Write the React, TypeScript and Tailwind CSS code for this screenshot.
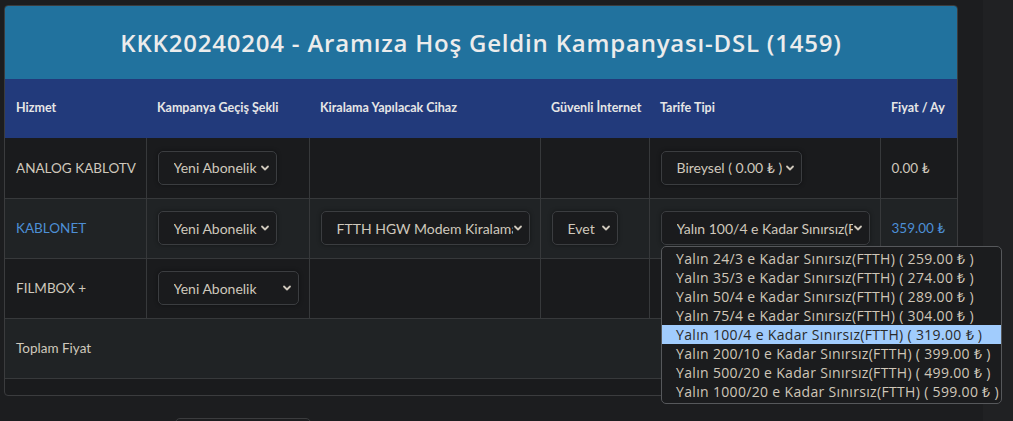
import React from "react";

const FONT = { fontFamily: "Lato, 'Open Sans', sans-serif" };

function Chevron({ className = "" }: { className?: string }) {
  return (
    <svg width="10" height="10" viewBox="0 0 10 10" className={className}>
      <path d="M2 3.5 L5 6.5 L8 3.5" fill="none" stroke="#cfc8bc" strokeWidth="1.8" strokeLinecap="round" strokeLinejoin="round" />
    </svg>
  );
}

function Select({ label, width, spread = false }: { label: string; width?: number; spread?: boolean }) {
  return (
    <div
      className={`flex h-[34px] items-center rounded-[5px] border border-[#3b3d40] bg-[#1a1b1d] pl-[15px] pr-[6px] text-[14px] text-[#cfc8bc] shadow-[0_0_4px_rgba(0,0,0,0.4)] ${spread ? "justify-between" : "w-fit gap-[3px]"}`}
      style={width ? { width } : undefined}
    >
      <span className="overflow-hidden whitespace-nowrap">{label}</span>
      <Chevron className="shrink-0" />
    </div>
  );
}

const options = [
  "Yalın 24/3 e Kadar Sınırsız(FTTH) ( 259.00 ₺ )",
  "Yalın 35/3 e Kadar Sınırsız(FTTH) ( 274.00 ₺ )",
  "Yalın 50/4 e Kadar Sınırsız(FTTH) ( 289.00 ₺ )",
  "Yalın 75/4 e Kadar Sınırsız(FTTH) ( 304.00 ₺ )",
  "Yalın 100/4 e Kadar Sınırsız(FTTH) ( 319.00 ₺ )",
  "Yalın 200/10 e Kadar Sınırsız(FTTH) ( 399.00 ₺ )",
  "Yalın 500/20 e Kadar Sınırsız(FTTH) ( 499.00 ₺ )",
  "Yalın 1000/20 e Kadar Sınırsız(FTTH) ( 599.00 ₺ )",
];

export default function App() {
  const td = "border-r border-[#37393b] px-[11px] align-middle whitespace-nowrap";
  return (
    <div className="relative flex h-[421px] w-[1013px] overflow-hidden bg-[#1c1d1f]" style={FONT}>
      <div className="w-[983px] shrink-0 pl-[4px] pt-[5px]">
        <div className="w-[954px] overflow-hidden rounded-[4px] border border-[#3b3c3e] bg-[#1a1b1d]">
          <div
            className="flex h-[73px] items-center justify-center bg-[#21729e] text-[24px] font-semibold tracking-[0.8px] text-[#ececec]"
            style={{ fontFamily: "'Open Sans', sans-serif" }}
          >
            KKK20240204 - Aramıza Hoş Geldin Kampanyası-DSL (1459)
          </div>
          <table className="w-[952px] table-fixed border-collapse text-[13.5px] text-[#cfc8bc]">
            <colgroup>
              <col style={{ width: 141 }} />
              <col style={{ width: 163 }} />
              <col style={{ width: 231 }} />
              <col style={{ width: 109 }} />
              <col style={{ width: 231 }} />
              <col style={{ width: 77 }} />
            </colgroup>
            <thead>
              <tr className="h-[59px] bg-[#223a7b] text-left text-[12.5px] font-bold text-[#e6e6e6]">
                <th className="px-[11px]">Hizmet</th>
                <th className="px-[11px]">Kampanya Geçiş Şekli</th>
                <th className="px-[11px]">Kiralama Yapılacak Cihaz</th>
                <th className="whitespace-nowrap px-[11px]">Güvenli İnternet</th>
                <th className="px-[11px]">Tarife Tipi</th>
                <th className="whitespace-nowrap px-[11px]">Fiyat / Ay</th>
              </tr>
            </thead>
            <tbody>
              <tr className="h-[60px] border-b border-[#37393b] bg-[#1a1b1d]">
                <td className={td}>ANALOG KABLOTV</td>
                <td className={td}><Select label="Yeni Abonelik" /></td>
                <td className={td}></td>
                <td className={td}></td>
                <td className={td}><Select label="Bireysel ( 0.00 ₺ )" /></td>
                <td className="px-[11px]">0.00 ₺</td>
              </tr>
              <tr className="h-[60px] border-b border-[#37393b] bg-[#202325]">
                <td className={`${td} text-[#4d8fd6]`}>KABLONET</td>
                <td className={td}><Select label="Yeni Abonelik" /></td>
                <td className={td}><Select label="FTTH HGW Modem Kiralama" width={209} spread /></td>
                <td className={td}><Select label="Evet" width={66} spread /></td>
                <td className={td}><Select label="Yalın 100/4 e Kadar Sınırsız(FTTH)" width={209} spread /></td>
                <td className="px-[11px] text-[#4d8fd6]">359.00 ₺</td>
              </tr>
              <tr className="h-[60px] border-b border-[#37393b] bg-[#1a1b1d]">
                <td className={td}>FILMBOX +</td>
                <td className={td}><Select label="Yeni Abonelik" width={141} spread /></td>
                <td className={td}></td>
                <td className={td}></td>
                <td className={td}></td>
                <td className="px-[11px]"></td>
              </tr>
              <tr className="h-[60px] border-b border-[#37393b] bg-[#202325]">
                <td className="px-[11px]" colSpan={6}>Toplam Fiyat</td>
              </tr>
            </tbody>
          </table>
          <div className="h-[16px]" />
        </div>
        <div className="ml-[171px] mt-[22px] h-[20px] w-[136px] rounded-t-[5px] border border-[#3b3c3e]" />
      </div>
      <div className="flex-1 bg-[#202123]" />

      {/* open tariff list */}
      <div
        className="absolute left-[661px] top-[246px] w-[341px] rounded-[5px] border border-[#56585b] bg-[#1b1c1e] py-[2px] text-[14px] leading-[19px] tracking-[0.33px] text-[#cfc6b8]"
        style={{ fontFamily: "'Open Sans', sans-serif" }}
      >
        {options.map((o, i) => (
          <div
            key={o}
            className={`whitespace-nowrap pl-[14px] ${i === 4 ? "bg-[#a1ccfd] text-[#2a2a2a]" : ""}`}
          >
            {o}
          </div>
        ))}
      </div>
    </div>
  );
}
